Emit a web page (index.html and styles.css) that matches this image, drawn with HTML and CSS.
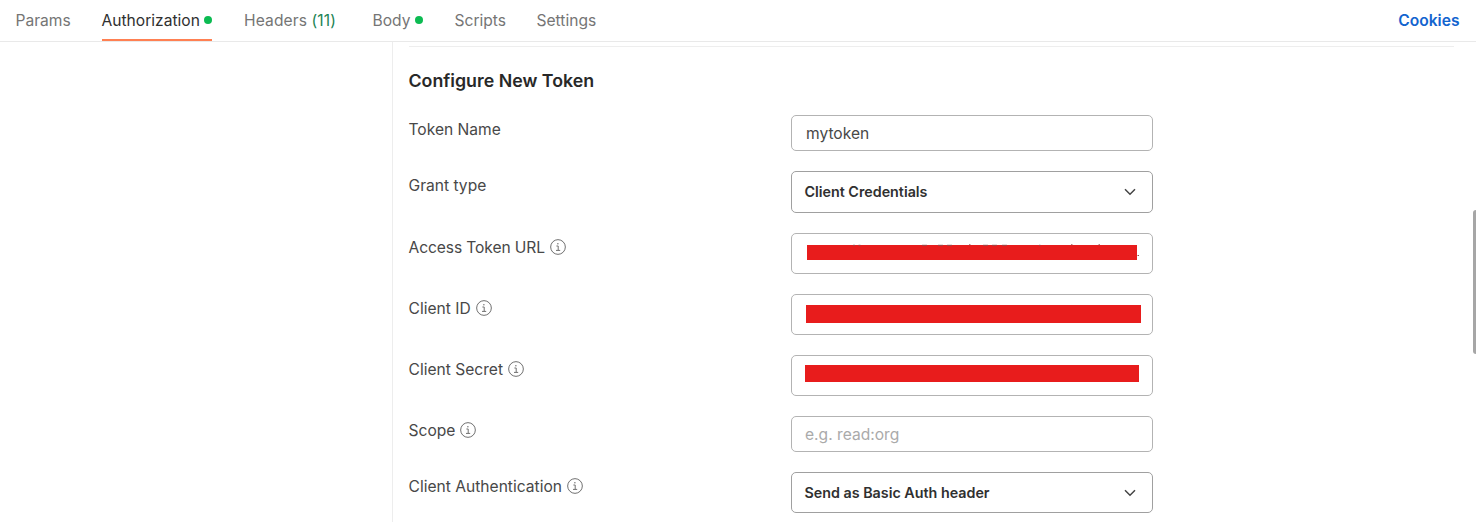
FILE: index.html
```html
<!DOCTYPE html>
<html lang="en">
<head>
<meta charset="utf-8">
<title>Authorization</title>
<link rel="stylesheet" href="styles.css">
</head>
<body>
<svg class="defs" aria-hidden="true">
  <symbol id="info" viewBox="0 0 16 16"><circle cx="8" cy="8" r="7.35"/><path d="M6.4 7h1.8v4.3M6 11.4h4.2"/><circle class="dot-fill" cx="7.9" cy="4.7" r=".75"/></symbol>
  <symbol id="chevron" viewBox="0 0 12 8"><path d="M1 1.2l5 5 5-5"/></symbol>
</svg>
<nav class="tabs">
  <a class="tab params">Params</a>
  <a class="tab active"><span class="auth">Authorization</span><i class="dot"></i></a>
  <a class="tab headers">Headers <span class="count">(11)</span></a>
  <a class="tab body-tab"><span>Body</span><i class="dot"></i></a>
  <a class="tab scripts">Scripts</a>
  <a class="tab">Settings</a>
  <a class="cookies">Cookies</a>
</nav>
<main class="content">
  <aside class="side"></aside>
  <section class="panel">
    <hr class="rule">
    <h2 class="title">Configure New Token</h2>
    <div class="form">
      <div class="row short"><label class="label">Token Name</label><div class="field value">mytoken</div></div>
      <div class="row first-select"><label class="label">Grant type</label><div class="field select"><span>Client Credentials</span><svg class="chevron"><use href="#chevron"/></svg></div></div>
      <div class="row"><label class="label tight">Access Token URL</label><svg class="info"><use href="#info"/></svg>
        <div class="field"><div class="redact url"></div>
          <svg class="tips" viewBox="0 0 336 16"><path d="M46 1.300h2M51.500 1.300h2M115 1.300h5M131 1.300h5M140 1.300h5M162 .8h1.500M176 1.300h5M185 1.300h5M195 1.300h5M232 1.300h1.500M264 .8h1.500M291.500 .8h1.500M330.500 11.500h1.500"/></svg></div></div>
      <div class="row"><label class="label">Client ID</label><svg class="info"><use href="#info"/></svg><div class="field"><div class="redact id"></div></div></div>
      <div class="row"><label class="label">Client Secret</label><svg class="info"><use href="#info"/></svg><div class="field"><div class="redact secret"></div></div></div>
      <div class="row short"><label class="label">Scope</label><svg class="info"><use href="#info"/></svg><div class="field placeholder">e.g. read:org</div></div>
      <div class="row"><label class="label">Client Authentication</label><svg class="info"><use href="#info"/></svg><div class="field select"><span>Send as Basic Auth header</span><svg class="chevron"><use href="#chevron"/></svg></div></div>
    </div>
  </section>
</main>
<div class="scrollbar"></div>
</body>
</html>
```
FILE: styles.css
```css
* { box-sizing: border-box; }
body { margin: 0; width: 1476px; height: 522px; overflow: hidden; background: #fff; font: 15.600px/20px Inter, sans-serif; color: #484848; }
.defs { display: none; }
.tabs { display: flex; height: 42px; padding: 0 16.500px 0 15.500px; border-bottom: 1px solid #e9e9e9; color: #757575; line-height: 22px; }
.tab { display: flex; align-items: center; height: 41px; padding-top: 1px; white-space: pre; }
.params { width: 55px; margin-right: 31px; }
.active { width: 110.500px; margin-right: 32px; color: #303030; border-bottom: 2px solid #ff8052; padding: 3px 0 0; justify-content: space-between; }
.headers { width: 93px; margin-right: 35.500px; letter-spacing: .1px; }
.body-tab { width: 50.500px; margin-right: 31.500px; justify-content: space-between; }
.scripts { width: 51px; margin-right: 31px; }
.count { color: #218354; }
.dot { width: 8px; height: 8px; margin-bottom: 2px; border-radius: 50%; background: #0cbb52; }
.cookies { margin-left: auto; line-height: 42px; font-weight: 600; color: #1264cf; }
.content { display: flex; height: 480px; }
.side { width: 391.500px; }
.panel { flex: 1; border-left: 1px solid #ededed; padding: 4px 22px 0 16px; }
.rule { height: 1px; margin: 0; border: 0; background: #eee; }
.title { margin: 21px 0 22px; font-size: 17.800px; line-height: 25px; font-weight: 600; color: #282828; }
.form { display: flex; flex-direction: column; gap: 20px; }
.row { display: flex; height: 41px; }
.short { height: 36px; }
.first-select { height: 42px; }
.label { margin-top: 5px; white-space: nowrap; }
.tight { letter-spacing: -.1px; }
.info { width: 16px; height: 16px; margin: 6px 0 0 5px; fill: none; stroke: #707070; stroke-width: 1; }
.dot-fill { fill: #707070; stroke: none; }
.field { display: flex; align-items: center; position: relative; width: 362px; margin-left: auto; margin-right: 301px; border: 1px solid #b3b3b3; border-radius: 5px; }
.value { padding: 2px 0 0 14px; }
.placeholder { padding: 2px 0 0 13px; color: #aaa; }
.select { justify-content: space-between; padding: 0 16px 0 12.500px; border: 1.500px solid #a0a0a0; font-size: 14.300px; font-weight: 600; color: #303030; }
.chevron { width: 12px; height: 8px; fill: none; stroke: #444; stroke-width: 1.500; }
.redact { background: #e81c1c; }
.url { width: 330px; height: 15px; margin: 0 0 2px 15px; }
.id { width: 335px; height: 18px; margin: 0 0 2px 14px; }
.secret { width: 334px; height: 17px; margin: 0 0 5px 13px; }
.tips { position: absolute; left: 15px; top: 10px; width: 336px; height: 16px; fill: none; stroke: #954c4c; stroke-width: 1; }
.scrollbar { position: absolute; right: 0; top: 210px; width: 3px; height: 144px; border-radius: 3px 0 0 3px; background: #a6a6a6; }
```
